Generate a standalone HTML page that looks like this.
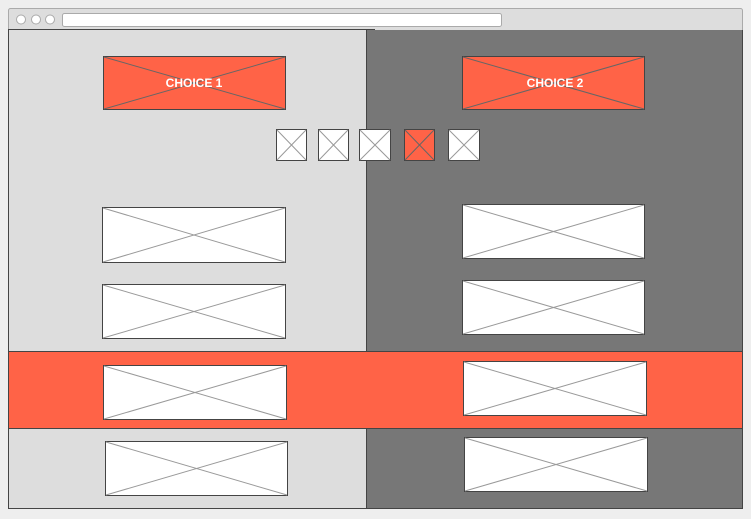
<!DOCTYPE html>
<html><head><style>html,body{margin:0;padding:0;background:#eeeeee;overflow:hidden}</style></head><body>
<svg width="751" height="519" xmlns="http://www.w3.org/2000/svg" style="display:block">
<rect x="0" y="0" width="751" height="519" fill="#eeeeee"/>
<rect x="8.5" y="8.5" width="734" height="500" rx="2" fill="#dddddd" stroke="#aaaaaa"/>
<rect x="8" y="29" width="358" height="480" fill="#dddddd"/>
<rect x="366" y="30" width="376" height="479" fill="#777777"/>
<line x1="8" y1="29.5" x2="375" y2="29.5" stroke="#444"/>
<line x1="366.5" y1="30" x2="366.5" y2="509" stroke="#444"/>
<line x1="8.5" y1="29" x2="8.5" y2="509" stroke="#444"/>
<line x1="8" y1="508.5" x2="742" y2="508.5" stroke="#444"/>
<line x1="742.5" y1="30" x2="742.5" y2="509" stroke="#444"/>
<rect x="8.5" y="351.5" width="734" height="77" fill="#ff6347" stroke="#444"/>
<circle cx="21" cy="19.5" r="4.5" fill="#fff" stroke="#aaa"/>
<circle cx="36" cy="19.5" r="4.5" fill="#fff" stroke="#aaa"/>
<circle cx="50" cy="19.5" r="4.5" fill="#fff" stroke="#aaa"/>
<rect x="62.5" y="13.5" width="439" height="13" rx="2" fill="#fff" stroke="#aaa"/>
<g stroke-width="1">
<g stroke="#444" fill="#ff6347">
<rect x="103.5" y="56.5" width="182" height="53"/><rect x="462.5" y="56.5" width="182" height="53"/>
<rect x="404.5" y="129.5" width="30" height="31"/>
</g>
<g stroke="#666"><path d="M104 57L285 109M104 109L285 57M463 57L644 109M463 109L644 57M405 130L434 160M405 160L434 130"/></g>
<g stroke="#444" fill="#fff">
<rect x="276.5" y="129.5" width="30" height="31"/><rect x="318.5" y="129.5" width="30" height="31"/><rect x="359.5" y="129.5" width="31" height="31"/><rect x="448.5" y="129.5" width="31" height="31"/>
<rect x="102.5" y="207.5" width="183" height="55"/><rect x="102.5" y="284.5" width="183" height="54"/><rect x="103.5" y="365.5" width="183" height="54"/><rect x="105.5" y="441.5" width="182" height="54"/>
<rect x="462.5" y="204.5" width="182" height="54"/><rect x="462.5" y="280.5" width="182" height="54"/><rect x="463.5" y="361.5" width="183" height="54"/><rect x="464.5" y="437.5" width="183" height="54"/>
</g>
<g stroke="#999"><path d="M277 130L306 160M277 160L306 130M319 130L348 160M319 160L348 130M360 130L390 160M360 160L390 130M449 130L479 160M449 160L479 130
M103 208L285 262M103 262L285 208M103 285L285 338M103 338L285 285M104 366L286 419M104 419L286 366M106 442L287 495M106 495L287 442
M463 205L644 258M463 258L644 205M463 281L644 334M463 334L644 281M464 362L646 415M464 415L646 362M465 438L647 491M465 491L647 438"/></g>
</g>
<text x="194" y="87" text-anchor="middle" font-family="Liberation Sans, sans-serif" font-weight="bold" font-size="12" fill="#fff">CHOICE 1</text>
<text x="555" y="87" text-anchor="middle" font-family="Liberation Sans, sans-serif" font-weight="bold" font-size="12" fill="#fff">CHOICE 2</text>
</svg>
</body></html>
